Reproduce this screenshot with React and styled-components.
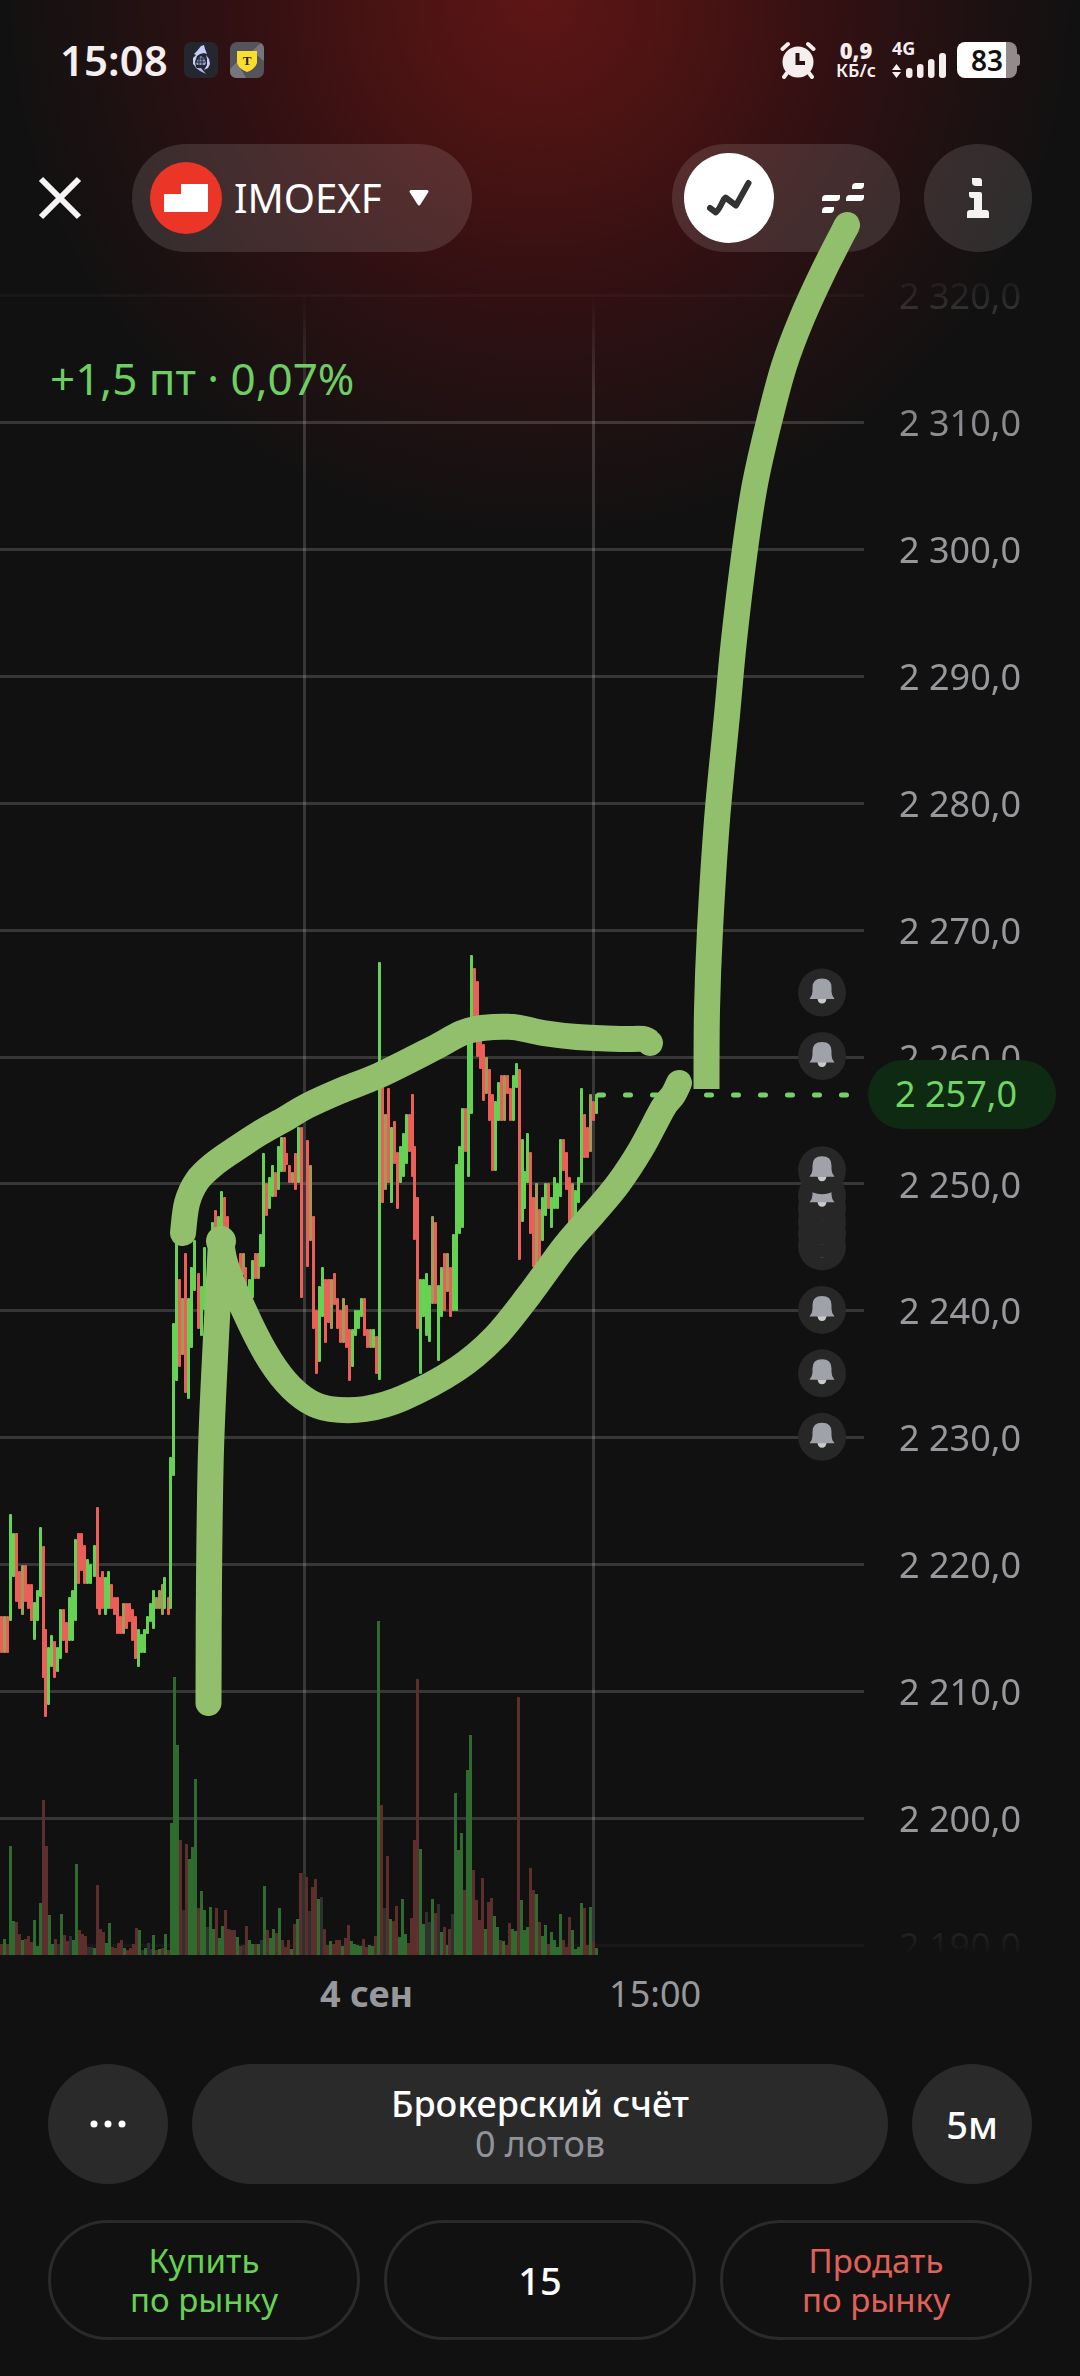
import React from 'react'
import styled, { createGlobalStyle } from 'styled-components'

const GlobalStyle = createGlobalStyle`
  * {
    box-sizing: border-box;
  }

  body {
    margin: 0;
    background: #111111;
  }

  button, input {
    font-family: inherit;
    margin: 0;
    padding: 0;
  }

  button {
    cursor: pointer;
  }
`

const UP = '#66d152'
const DOWN = '#ec5f59'
const MIXED = '#a39a58'

const TOP_PRICE = 2325
const PRICE_STEP = 10
const ROWS = 14
const ROW_HEIGHT = 126.93
const CHART_TOP = 232
const VOLUME_BASE = 1955

const priceToY = price =>
  CHART_TOP + ((TOP_PRICE - price) / PRICE_STEP) * ROW_HEIGHT

const prices = Array.from({ length: ROWS }, (_, i) => 2320 - i * PRICE_STEP)

const alerts = [2230, 2235, 2240, 2245, 2246, 2247, 2248, 2249, 2251, 2260, 2265]

// x, top, bottom, direction
const candles = `
1 1616 1653 r|4 1616 1653 m|7 1616 1653 r|10 1514 1621 g|13 1533 1577 g|16 1533 1602 r
19 1571 1609 r|22 1565 1615 m|25 1565 1602 r|28 1584 1609 r|31 1584 1621 r|34 1602 1640 g
37 1590 1621 g|40 1527 1597 g|43 1546 1678 r|45 1629 1717 r|48 1647 1705 g|51 1635 1667 g
54 1641 1678 r|57 1647 1672 g|60 1609 1659 g|63 1609 1641 r|66 1622 1653 r|69 1597 1641 g
72 1590 1641 g|75 1539 1621 g|78 1533 1584 r|81 1533 1571 r|84 1545 1584 r|87 1559 1584 g
90 1564 1584 g|94 1545 1577 g|97 1507 1609 r|99 1577 1615 r|102 1571 1609 r|105 1577 1615 g
108 1571 1609 g|111 1584 1609 r|114 1597 1615 r|117 1597 1634 r|120 1616 1634 r|123 1603 1634 m
126 1603 1629 r|129 1603 1622 r|132 1609 1641 r|135 1616 1659 r|138 1629 1667 g|141 1634 1653 g
144 1629 1653 g|147 1616 1634 g|150 1603 1622 g|153 1590 1629 g|156 1597 1609 m|159 1590 1609 m
162 1584 1615 m|164 1577 1609 g|168 1597 1615 r|170 1457 1609 g|173 1323 1476 g|176 1227 1381 g
179 1279 1367 r|182 1298 1355 m|185 1253 1393 r|188 1298 1399 g|191 1267 1348 g|194 1240 1291 g
198 1273 1329 r|201 1286 1336 g|204 1247 1310 g|212 1222 1270 g|215 1210 1240 r|218 1216 1240 g
221 1191 1240 g|224 1197 1240 r|227 1216 1240 r|240 1253 1275 r|243 1253 1275 m|245 1267 1290 r
249 1279 1298 g|252 1260 1298 g|255 1253 1279 r|258 1253 1279 m|260 1234 1267 g|263 1153 1267 g
266 1183 1216 r|269 1177 1209 g|272 1165 1197 g|275 1172 1197 r|278 1146 1190 g|281 1137 1172 g
284 1137 1172 r|286 1153 1165 r|289 1165 1183 r|292 1172 1183 m|295 1153 1190 r|298 1127 1183 g
301 1127 1298 r|307 1140 1267 r|310 1165 1241 m|313 1216 1329 r|316 1310 1374 r|319 1286 1362 g
322 1267 1317 g|325 1279 1343 r|328 1279 1323 r|331 1279 1329 m|334 1273 1305 r|337 1298 1329 r
340 1310 1343 r|343 1298 1343 m|346 1305 1348 r|349 1329 1381 r|352 1329 1367 g|355 1310 1336 g
358 1310 1329 g|361 1298 1317 g|364 1298 1336 r|367 1329 1348 r|370 1329 1348 m|373 1329 1348 g
376 1336 1374 r|379 962 1380 g|382 1087 1203 r|385 1114 1190 m|388 1088 1183 r|391 1127 1203 g
394 1121 1164 r|397 1152 1209 r|400 1146 1183 g|403 1133 1177 g|406 1114 1164 g|409 1114 1152 r
412 1094 1177 r|414 1146 1240 r|417 1197 1329 r|420 1279 1374 g|423 1279 1317 g|426 1273 1336 g
429 1285 1342 g|432 1216 1304 m|435 1222 1304 r|438 1285 1361 g|441 1267 1317 g|444 1253 1311 r
447 1253 1292 m|450 1267 1317 r|453 1234 1311 g|456 1164 1311 g|459 1146 1234 g|462 1108 1228 g
465 1108 1152 r|468 1043 1177 g|471 955 1114 g|474 968 1030 r|477 981 1057 r|480 1037 1069 r
483 1044 1101 r|486 1057 1094 m|489 1069 1121 r|492 1094 1171 r|495 1101 1171 g|498 1082 1121 g
501 1075 1121 r|504 1075 1121 m|507 1075 1094 r|510 1088 1121 r|513 1075 1121 g|516 1063 1088 g
519 1069 1260 r|522 1139 1222 g|524 1171 1209 g|527 1133 1183 g|530 1152 1234 r|533 1197 1267 r
536 1183 1267 m|539 1209 1260 r|542 1197 1241 g|545 1183 1216 g|548 1183 1209 r|551 1197 1228 g
554 1177 1209 g|557 1183 1209 g|560 1139 1197 g|563 1139 1171 r|566 1152 1190 r|569 1177 1228 r
572 1183 1223 m|575 1190 1220 g|578 1177 1203 g|581 1088 1183 g|584 1114 1158 r|587 1127 1158 r
590 1094 1152 m|593 1101 1121 r|596 1094 1114 g`
  .trim()
  .split(/[|\n]/)
  .map(item => {
    const [x, top, bottom, dir] = item.split(' ')
    return { x: +x, top: +top, bottom: +bottom, dir }
  })

// height of every bar, oldest first (k - volume without direction)
const volumes = `
r11 g16 r11 g109 g34 r33 r21 g15 r16 r19 r13 g35 g9 g52 r155 r109 g40 g11 r16 k11 g41 r20 r14 k19 g15
g91 r25 r21 r19 k8 k8 g7 r70 r26 r23 g12 g32 r8 r7 r12 r15 g7 r5 r7 r11 r27 g25 k5 g7 k12 k6 g20 r5
g6 r7 g21 r5 g132 g278 g210 r115 k45 r111 g96 g108 g176 r47 g64 g45 k28 g48 g26 r47 g17 g29 r45 r26
r25 r25 g18 r9 k10 r29 g15 g11 r11 g11 k15 g69 r25 g17 g26 r22 g47 r15 r8 r15 g6 r31 g36 r82 k82 r78
k44 r68 r76 g56 k58 r26 r10 g14 r11 r15 r15 g9 r17 r30 g14 g11 g10 g9 r16 r8 g10 g9 r19 g334 r150 k47
r99 g36 r34 r49 g18 g56 g21 r12 r37 r115 r276 g106 g31 k43 k33 g56 r42 k51 g23 r28 g10 r26 k41 g162
g105 g122 r65 g185 g220 r85 r55 r35 r77 g26 r53 r57 g39 g28 r15 g14 r10 r32 g26 g24 r258 g55 g25 g28
r87 r65 g61 r33 g19 g30 r11 g23 g15 g8 g41 r15 r8 r38 g25 g6 g8 g52 r47 r10 g48 r14 g7`
  .trim()
  .split(/\s+/)
  .map(item => ({ dir: item[0], value: +item.slice(1) }))

const volumeStep = 595 / (volumes.length - 1)

const candleColors = { g: UP, r: DOWN, m: MIXED }
const volumeColors = { g: '#2f6a2e', r: '#5c2e2c', k: '#303032' }

// smooth curve through the given points
const curve = points =>
  points.slice(1).reduce((path, [x, y], i) => {
    const [x0, y0] = points[i - 1] || points[i]
    const [x1, y1] = points[i]
    const [x3, y3] = points[i + 2] || [x, y]
    const c1 = [x1 + (x - x0) / 6, y1 + (y - y0) / 6]
    const c2 = [x - (x3 - x1) / 6, y - (y3 - y1) / 6]
    return `${path}C${c1} ${c2} ${x},${y}`
  }, `M${points[0]}`)

const pole = [[208.5, 1703], [209, 1580], [211, 1450], [216, 1337], [219, 1280], [221, 1241]]

const cup = [
  [221, 1241], [226, 1266], [243, 1308], [265, 1352], [286, 1382], [308, 1401],
  [330, 1409], [365, 1409], [403, 1398], [457, 1369], [495, 1337], [529, 1295],
  [565, 1246], [593, 1214], [618, 1184], [641, 1149], [663, 1108], [673, 1095],
  [679, 1083],
]

const lid = [
  [183, 1233], [187, 1203], [197, 1181], [213, 1165], [234, 1150], [260, 1133],
  [285, 1119], [307, 1106], [340, 1091], [380, 1075], [432, 1049], [462, 1033],
  [482, 1028], [513, 1027], [543, 1033], [577, 1037], [620, 1039], [643, 1039],
  [650, 1043],
]

const rise = [
  [706.5, 1089], [707, 1010], [710, 930], [717, 820], [727, 715], [734, 640],
  [745, 549], [755, 484], [769, 422], [784, 366], [802, 318], [824, 270],
  [847, 225],
]

const Page = styled.div`
  position: relative;
  min-height: 100vh;
  overflow: hidden;
  color: #ffffff;
  font-family: 'Noto Sans', 'Open Sans', sans-serif;
  background:
    radial-gradient(
      circle 540px at 50% 0,
      #5e1515 0%,
      #4a1313 28%,
      #331012 54%,
      #201112 78%,
      #111111 100%
    )
    no-repeat #111111;
`

const StatusBar = styled.div`
  display: flex;
  align-items: center;
  height: 120px;
  padding: 0 63px 0 60px;
  color: #f5eeee;
`

const Clock = styled.time`
  margin-right: 16px;
  font-size: 42px;
  font-weight: 600;
  line-height: 48px;
`

const AppIcons = styled.div`
  display: flex;
  gap: 12px;
  margin-right: auto;
`

const StatusGroup = styled.div`
  display: flex;
  align-items: center;
  gap: 12px;
`

const Speed = styled.div`
  display: flex;
  flex-direction: column;
  align-items: center;
  width: 56px;
  font-size: 18px;
  font-weight: 600;
  line-height: 20px;

  b {
    font-size: 22px;
    line-height: 20px;
  }
`

const Signal = styled.div`
  display: flex;
  flex-direction: column;
  margin-left: -4px;
  font-size: 18px;
  font-weight: 700;
  line-height: 12px;

  svg {
    margin-top: -2px;
  }
`

const Battery = styled.div`
  position: relative;
  width: 60px;
  height: 36px;
  margin-left: -2px;
  border-radius: 8px;
  background: linear-gradient(to right, #ffffff 82%, #938b8b 82%);
  color: #111111;
  font-size: 28px;
  font-weight: 600;
  line-height: 36px;
  text-align: center;

  &::after {
    content: '';
    position: absolute;
    right: -3px;
    top: 12px;
    width: 3px;
    height: 12px;
    border-radius: 0 3px 3px 0;
    background: #938b8b;
  }
`

const Header = styled.header`
  position: relative;
  z-index: 1;
  display: flex;
  align-items: center;
  gap: 24px;
  padding: 24px 48px 0 24px;
`

const CloseButton = styled.button`
  display: flex;
  align-items: center;
  justify-content: center;
  width: 72px;
  height: 72px;
  margin-right: 12px;
  border: none;
  background: none;
`

const TickerButton = styled.button`
  display: flex;
  align-items: center;
  height: 108px;
  margin-right: auto;
  padding: 0 42px 0 18px;
  border: none;
  border-radius: 54px;
  background: rgba(255, 255, 255, 0.12);
  color: #ffffff;
  font-size: 40px;
  line-height: 48px;

  span {
    margin: 0 26px 0 12px;
  }
`

const ChartSwitch = styled.div`
  display: flex;
  align-items: center;
  gap: 24px;
  height: 108px;
  padding: 0 12px;
  border-radius: 54px;
  background: rgba(255, 255, 255, 0.12);
`

const SwitchButton = styled.button`
  display: flex;
  align-items: center;
  justify-content: center;
  width: 90px;
  height: 90px;
  border: none;
  border-radius: 50%;
  background: ${props => (props.$active ? '#ffffff' : 'transparent')};
`

const InfoButton = styled.button`
  display: flex;
  align-items: center;
  justify-content: center;
  width: 108px;
  height: 108px;
  border: none;
  border-radius: 50%;
  background: rgba(255, 255, 255, 0.12);
`

const Chart = styled.section`
  position: relative;
  display: flex;
  margin-top: -20px;
`

const Plot = styled.svg`
  display: block;
  flex: 1;
  min-width: 0;
`

const PriceAxis = styled.div`
  position: relative;
  display: flex;
  flex-direction: column;
  width: 216px;
`

const PriceLabels = styled.div`
  display: flex;
  flex: 1;
  flex-direction: column;
  padding-right: 24px;
  color: #97989c;
  font-size: 36px;
  mask-image: linear-gradient(
    transparent 2%,
    rgba(0, 0, 0, 0.2) 4%,
    rgba(0, 0, 0, 0.75) 9%,
    #000 12%,
    #000 91%,
    rgba(0, 0, 0, 0.2) 95%,
    transparent 97%
  );
`

const PriceLabel = styled.div`
  display: flex;
  flex: 1;
  align-items: center;
  justify-content: center;
`

const LastPrice = styled.div`
  position: absolute;
  left: 4px;
  right: 24px;
  height: 69px;
  margin-top: -35px;
  padding-right: 12px;
  border-radius: 35px;
  background: #0f2a12;
  color: #6fd663;
  font-size: 36px;
  line-height: 68px;
  text-align: center;
`

const Change = styled.div`
  position: absolute;
  left: 50px;
  top: 116px;
  color: #6fce62;
  font-size: 44px;
  line-height: 60px;
`

const TimeAxis = styled.div`
  position: relative;
  display: flex;
  gap: 196px;
  margin-top: -35px;
  padding: 0 48px 50px 320px;
  color: #97989c;
  font-size: 36px;
  line-height: 40px;
`

const Footer = styled.footer`
  display: flex;
  flex-direction: column;
  gap: 36px;
  padding: 0 48px 32px;
`

const Row = styled.div`
  display: flex;
  gap: 24px;
`

const RoundButton = styled.button`
  display: flex;
  align-items: center;
  justify-content: center;
  width: 120px;
  height: 120px;
  border: none;
  border-radius: 50%;
  background: #2a2a2a;
  color: #ffffff;
  font-size: 38px;
  font-weight: 500;
`

const AccountButton = styled.button`
  display: flex;
  flex: 1;
  flex-direction: column;
  align-items: center;
  justify-content: center;
  height: 120px;
  border: none;
  border-radius: 60px;
  background: #2a2a2a;
  color: #ffffff;
  font-size: 36px;
  font-weight: 500;
  line-height: 40px;

  small {
    color: #919399;
    font-size: 36px;
    font-weight: 400;
  }
`

const OrderButton = styled.button`
  flex: 1;
  height: 120px;
  border: 3px solid #2a2a2a;
  border-radius: 60px;
  background: none;
  color: ${props => (props.$sell ? '#e0605a' : '#66d152')};
  font-size: 33px;
  line-height: 39px;
`

const LotsInput = styled.input`
  flex: 1;
  min-width: 0;
  height: 120px;
  border: 3px solid #2a2a2a;
  border-radius: 60px;
  background: none;
  color: #ffffff;
  font-size: 38px;
  font-weight: 500;
  text-align: center;
`

const Drawing = styled.svg`
  position: absolute;
  z-index: 2;
  top: 0;
  left: 0;
  width: 100%;
  pointer-events: none;
`

const WolfIcon = () => (
  <svg width="34" height="36" viewBox="0 0 34 36" aria-hidden="true">
    <rect width="34" height="36" rx="7" fill="#24272d" />
    <path
      d="M17 4l3-1 1 4 2 5-3-1-4 1-3 2-2 6 1 5-3-3V16l3-3-2-1 3-3z"
      fill="#c6cdfb"
    />
    <path d="M22 13l3 4 1 5-2 4-4 2 3-5v-6z" fill="#c6cdfb" />
    <path d="M12 21l2-4 3-3 3 2 2 5-1 2h-8z" fill="#8e9ad0" />
    <path d="M12 20h9M13 17h7M15 15v8M18 15v8" stroke="#24272d" fill="none" />
    <path d="M10 23l3 3h4l5 6-6-3-4-3z" fill="#a9b2ee" />
  </svg>
)

const BankIcon = () => (
  <svg width="34" height="36" viewBox="0 0 34 36" aria-hidden="true">
    <rect width="34" height="36" rx="7" fill="#54555a" />
    <path d="M0 27L7 20l9 16H7q-7 0-7-7zM22 9l9-8q3 2 3 6v12z" fill="#76777d" />
    <path d="M7 9h20v12q-2 6-10 9Q9 27 7 21z" fill="#fbdc2f" />
    <text
      x="17"
      y="23"
      textAnchor="middle"
      fontFamily="'Liberation Serif', serif"
      fontWeight="700"
      fontSize="13"
      fill="#222222"
    >
      T
    </text>
  </svg>
)

const AlarmIcon = () => (
  <svg width="36" height="38" viewBox="0 0 36 38" fill="none" aria-hidden="true">
    <circle cx="18" cy="21" r="15.5" fill="#f5eeee" />
    <path
      d="M2.500 8L8 3M33.500 8L28 3M7 32l-3 4M29 32l3 4"
      stroke="#f5eeee"
      strokeWidth="4"
      strokeLinecap="round"
    />
    <path d="M17.500 12v10H25" stroke="#2c1112" strokeWidth="4" />
  </svg>
)

const SignalIcon = () => (
  <svg width="55" height="26" viewBox="0 0 55 26" fill="#f5eeee" aria-hidden="true">
    <path d="M0 18l4.500-6L9 18zM0 20h9l-4.500 6z" />
    <rect x="14" y="16" width="6.500" height="10" rx="3" />
    <rect x="25" y="12" width="6.500" height="14" rx="3" />
    <rect x="36" y="7" width="6.500" height="19" rx="3" />
    <rect x="47" y="1" width="7" height="25" rx="3" />
  </svg>
)

const Bell = ({ y }) => (
  <g transform={`translate(822 ${y})`}>
    <circle r="24" fill="#272727" />
    <path d="M-4.500 6h9q-.5 5-4.500 5t-4.500-5z" fill="#c9cacc" />
    <path
      d="M-9.500-5q0-9 9.500-9t9.500 9v4q0 4 3 7.500H-12.500q3-3.500 3-7.500z"
      fill="#9fa2a8"
    />
  </g>
)

const PricePlot = () => (
  <Plot
    viewBox={`0 ${CHART_TOP} 864 ${ROW_HEIGHT * ROWS}`}
    role="img"
    aria-label="IMOEXF"
  >
    <defs>
      <linearGradient id="fade" gradientUnits="userSpaceOnUse" x1="0" y1="295" x2="0" y2="400">
        <stop offset="0" stopColor="#fff" stopOpacity="0" />
        <stop offset="1" stopColor="#fff" stopOpacity="0.16" />
      </linearGradient>
    </defs>
    {prices.map(price => (
      <rect
        key={price}
        x="0"
        y={Math.round(priceToY(price) - 1.5)}
        width="864"
        height="3"
        fill="#ffffff"
        opacity={price === 2320 || price === 2190 ? 0.03 : 0.16}
      />
    ))}
    {[303, 592].map(x => (
      <rect key={x} x={x} y="295" width="3" height="1660" fill="url(#fade)" />
    ))}
    {volumes.map((bar, i) => (
      <rect
        key={i}
        x={Math.round(i * volumeStep)}
        y={VOLUME_BASE - bar.value}
        width="3"
        height={bar.value}
        fill={volumeColors[bar.dir]}
      />
    ))}
    {candles.map(candle => (
      <rect
        key={candle.x}
        x={candle.x - 1}
        y={candle.top}
        width="3"
        height={candle.bottom - candle.top}
        rx="1"
        fill={candleColors[candle.dir]}
      />
    ))}
    <path
      d={`M598.500 ${priceToY(2257)}H864`}
      stroke="#74d067"
      strokeWidth="5"
      strokeLinecap="round"
      strokeDasharray="5 22"
    />
    {alerts.map(price => (
      <Bell key={price} y={priceToY(price) - 1} />
    ))}
  </Plot>
)

const App = () => (
  <>
    <GlobalStyle />
    <Page>
      <StatusBar>
        <Clock>15:08</Clock>
        <AppIcons>
          <WolfIcon />
          <BankIcon />
        </AppIcons>
        <StatusGroup>
          <AlarmIcon />
          <Speed>
            <b>0,9</b>
            КБ/с
          </Speed>
          <Signal>
            4G
            <SignalIcon />
          </Signal>
          <Battery>83</Battery>
        </StatusGroup>
      </StatusBar>

      <Header>
        <CloseButton aria-label="Закрыть">
          <svg width="44" height="44" viewBox="0 0 44 44">
            <path d="M3 3l38 38M41 3L3 41" stroke="#f6f4f4" strokeWidth="6" />
          </svg>
        </CloseButton>
        <TickerButton>
          <svg width="72" height="72" viewBox="0 0 72 72">
            <circle cx="36" cy="36" r="36" fill="#ea3527" />
            <path d="M14 32h17V22h27v28H14z" fill="#ffffff" />
          </svg>
          <span>IMOEXF</span>
          <svg width="22" height="18" viewBox="0 0 22 18">
            <path
              d="M3 2.500h16L11 15z"
              fill="#ffffff"
              stroke="#ffffff"
              strokeWidth="3"
              strokeLinejoin="round"
            />
          </svg>
        </TickerButton>
        <ChartSwitch>
          <SwitchButton $active aria-pressed="true" aria-label="График">
            <svg width="46" height="40" viewBox="0 0 46 40">
              <path
                d="M4 30l6 4.500q1.500 0 8-13.500l1.500-1.500L30 27.500 42.500 5"
                fill="none"
                stroke="#333333"
                strokeWidth="6"
                strokeLinecap="round"
                strokeLinejoin="round"
              />
            </svg>
          </SwitchButton>
          <SwitchButton aria-pressed="false" aria-label="Стакан">
            <svg width="42" height="30" viewBox="0 0 42 30" fill="#ffffff">
              <path d="M34 0h8v2q0 4-4 4h-8V4q0-4 4-4z" />
              <path d="M4 12h14v2q0 4-4 4H0v-2q0-4 4-4z" />
              <path d="M28 12h14v2q0 4-4 4H24v-2q0-4 4-4z" />
              <path d="M4 24h8v2q0 4-4 4H0v-2q0-4 4-4z" />
            </svg>
          </SwitchButton>
        </ChartSwitch>
        <InfoButton aria-label="Информация">
          <svg width="22" height="40" viewBox="0 0 22 40" fill="#f4f2f2">
            <path d="M5 0h7q3 0 3 3v5H9Q5 8 5 4z" />
            <path d="M2 14h11q2 0 2 2v16h4q3 0 3 3v5H0v-5q0-3 3-3h4V20H5q-3 0-3-3z" />
          </svg>
        </InfoButton>
      </Header>

      <Chart>
        <PricePlot />
        <PriceAxis>
          <PriceLabels>
            {prices.map(price => (
              <PriceLabel key={price}>
                {'2 ' + String(price).slice(1) + ',0'}
              </PriceLabel>
            ))}
          </PriceLabels>
          <LastPrice
            style={{
              top: ((TOP_PRICE - 2257) / (PRICE_STEP * ROWS)) * 100 + '%',
            }}
          >
            2 257,0
          </LastPrice>
        </PriceAxis>
        <Change>+1,5 пт · 0,07%</Change>
      </Chart>

      <TimeAxis>
        <b>4 сен</b>
        <span>15:00</span>
      </TimeAxis>

      <Footer>
        <Row>
          <RoundButton aria-label="Ещё">
            <svg width="38" height="8" viewBox="0 0 38 8" fill="#ffffff">
              <circle cx="5" cy="4" r="3.500" />
              <circle cx="19" cy="4" r="3.500" />
              <circle cx="33" cy="4" r="3.500" />
            </svg>
          </RoundButton>
          <AccountButton>
            Брокерский счёт
            <small>0 лотов</small>
          </AccountButton>
          <RoundButton>5м</RoundButton>
        </Row>
        <Row>
          <OrderButton>
            Купить
            <br />
            по рынку
          </OrderButton>
          <LotsInput aria-label="Количество лотов" defaultValue="15" />
          <OrderButton $sell>
            Продать
            <br />
            по рынку
          </OrderButton>
        </Row>
      </Footer>

      <Drawing
        viewBox="0 0 1080 2340"
        fill="none"
        stroke="#92bf6b"
        strokeWidth="26"
        strokeLinecap="round"
        strokeLinejoin="round"
        aria-hidden="true"
      >
        <path d={curve(pole)} />
        <path d={curve(cup)} />
        <circle cx="221" cy="1241" r="2" />
        <path d={curve(lid)} />
        <path d={curve(rise)} strokeLinecap="butt" />
        <path d="M846 227L847 225" />
      </Drawing>
    </Page>
  </>
)

export default App
